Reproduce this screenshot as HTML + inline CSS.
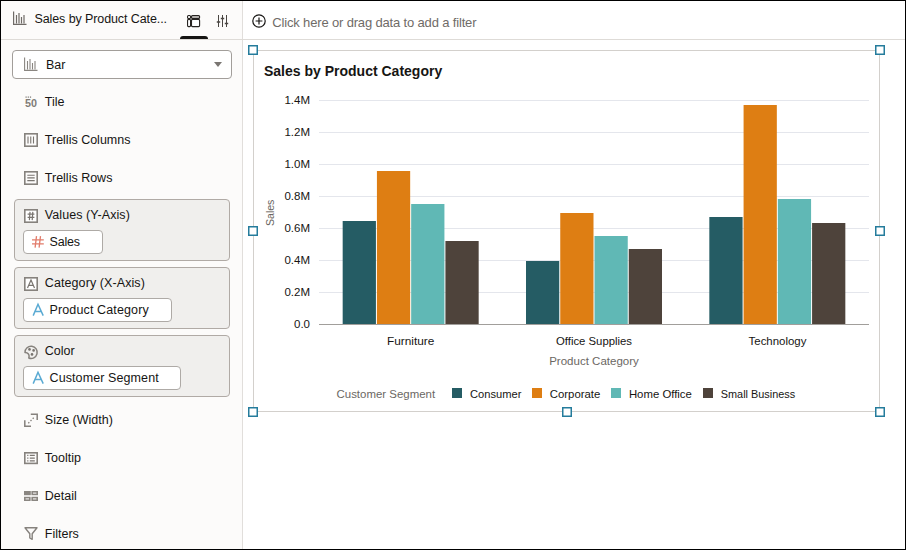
<!DOCTYPE html>
<html><head><meta charset="utf-8">
<style>
*{box-sizing:border-box;margin:0;padding:0}
html,body{width:906px;height:550px;overflow:hidden;background:#fff}
body{position:relative;font-family:"Liberation Sans",sans-serif;color:#161513}
.a{position:absolute}
.t{position:absolute;white-space:nowrap;line-height:1}
#frame{left:0;top:0;width:906px;height:550px;border:1px solid #000;z-index:50;pointer-events:none}
#left{left:1px;top:1px;width:242px;height:548px;background:#fcfbfa;border-right:1px solid #e1dedb}
#hline{left:1px;top:39px;width:904px;height:1px;background:#dedbd7}
.box{position:absolute;left:14px;width:216px;height:62px;background:#f0efed;border:1px solid #b0aaa5;border-radius:4px}
.pill{position:absolute;left:23px;height:24px;background:#fff;border:1px solid #aeaaa6;border-radius:4px}
.it{font-size:12.5px;color:#161513;margin-top:1.3px}
.ic{position:absolute}
.ax{font-size:11.5px;color:#161513}
.handle{position:absolute;width:10px;height:10px;border:2px solid #227a9c;background:#fff}
</style></head><body>
<div id="left" class="a"></div>
<div id="hline" class="a"></div>

<!-- header -->
<svg class="ic" style="left:13px;top:11px" width="14" height="14" viewBox="0 0 14 14">
 <g stroke="#6f6b67" stroke-width="1.2" fill="none">
  <path d="M0.6 0.5V13.4H13.5"/>
  <path d="M3.5 4V12.5M6 2V12.5M8.5 6V12.5M11 4V12.5"/>
 </g>
</svg>
<div class="t" style="left:34.5px;top:12.6px;font-size:12.5px;letter-spacing:-0.1px;color:#161513">Sales by Product Cate...</div>

<!-- tab icons -->
<svg class="ic" style="left:186px;top:14px" width="16" height="14" viewBox="0 0 16 14">
 <g stroke="#262320" stroke-width="1.1">
  <rect x="1.55" y="1.55" width="3" height="3" rx="1" fill="#fff"/>
  <rect x="1.55" y="5.4" width="3" height="7.2" rx="1" fill="#fff"/>
  <rect x="5.5" y="1.55" width="8.1" height="3" rx="1" fill="#b3b0ad"/>
  <rect x="5.5" y="5.4" width="8.1" height="7.2" rx="1" fill="#fff"/>
 </g>
</svg>
<div class="a" style="left:180px;top:36px;width:28px;height:3px;background:#161513;border-radius:3px 3px 0 0"></div>
<svg class="ic" style="left:216px;top:15px" width="14" height="12" viewBox="0 0 14 12">
 <g stroke="#4a4642" fill="none">
  <path d="M2.5 0V12M6.5 0V12M10.5 0V12" stroke-width="1"/>
  <path d="M0.8 7H4.2M4.8 3.4H8.2M8.8 8.6H12.2" stroke-width="1.5"/>
 </g>
</svg>

<!-- filter bar -->
<svg class="ic" style="left:252px;top:14px" width="14" height="14" viewBox="0 0 14 14">
 <circle cx="7" cy="7" r="6.2" fill="none" stroke="#161513" stroke-width="1.2"/>
 <path d="M7 3.6V10.4M3.6 7H10.4" stroke="#161513" stroke-width="1.2"/>
</svg>
<div class="t" style="left:272.3px;top:16px;font-size:13px;letter-spacing:-0.16px;color:#6f6b67">Click here or drag data to add a filter</div>

<!-- dropdown -->
<div class="a" style="left:12px;top:50px;width:220px;height:29px;background:#fff;border:1px solid #a29e9a;border-radius:4px"></div>
<svg class="ic" style="left:24px;top:57px" width="14" height="14" viewBox="0 0 14 14">
 <g stroke="#8a8681" stroke-width="1.1" fill="none">
  <path d="M0.6 0.5V13.4H13.5"/>
  <path d="M3.5 4V12.5M6 2V12.5M8.5 6V12.5M11 4V12.5"/>
 </g>
</svg>
<div class="t it" style="left:46px;top:58px">Bar</div>
<svg class="ic" style="left:213px;top:62px" width="10" height="6" viewBox="0 0 10 6"><path d="M1 0H9L5 5Z" fill="#7a7672"/></svg>

<!-- items -->
<div class="t it" style="left:44.8px;top:94.4px">Tile</div>
<div class="t it" style="left:44.8px;top:132.4px">Trellis Columns</div>
<div class="t it" style="left:44.8px;top:170.4px">Trellis Rows</div>

<div class="box" style="top:199px"></div>
<div class="t it" style="left:44.8px;top:207.4px;letter-spacing:0.07px">Values (Y-Axis)</div>
<div class="pill" style="top:230px;width:80px"></div>
<div class="t it" style="left:49.5px;top:234.4px;letter-spacing:-0.2px">Sales</div>

<div class="box" style="top:267px"></div>
<div class="t it" style="left:44.8px;top:275.4px;letter-spacing:0.09px">Category (X-Axis)</div>
<div class="pill" style="top:298px;width:149px"></div>
<div class="t it" style="left:49.5px;top:302.4px;letter-spacing:0.13px">Product Category</div>

<div class="box" style="top:335px"></div>
<div class="t it" style="left:44.8px;top:343.9px">Color</div>
<div class="pill" style="top:366px;width:158px"></div>
<div class="t it" style="left:49.5px;top:370.4px;letter-spacing:0.1px">Customer Segment</div>

<div class="t it" style="left:44.8px;top:412.4px">Size (Width)</div>
<div class="t it" style="left:44.8px;top:450.4px">Tooltip</div>
<div class="t it" style="left:44.8px;top:488.4px">Detail</div>
<div class="t it" style="left:44.8px;top:526.4px">Filters</div>

<!--ICONS-->
<svg class="a" style="left:0;top:0" width="250" height="550" viewBox="0 0 250 550">
 <g fill="none" stroke="#86827d" stroke-width="1.6">
  <!-- trellis columns -->
  <rect x="24.8" y="133.8" width="12.4" height="12.4"/>
  <path d="M28 136.5V143.6M30.75 136.5V143.6M33.5 136.5V143.6" stroke="#7a7671" stroke-width="1.1"/>
  <!-- trellis rows -->
  <rect x="24.8" y="171.8" width="12.4" height="12.4"/>
  <path d="M27.3 175.2H34.7M27.3 177.9H34.7M27.3 180.6H34.7" stroke="#7a7671" stroke-width="1.1"/>
  <!-- values -->
  <rect x="24.8" y="209.8" width="12.4" height="12.4" fill="#fff"/>
  <path d="M27.6 214.2H34.4M27.6 217.4H34.4M30 211.9L29.4 220.1M32.8 211.9L32.2 220.1" stroke="#7a7671" stroke-width="1.2"/>
  <!-- category -->
  <rect x="24.8" y="277.8" width="12.4" height="12.4" fill="#fff"/>
  <path d="M27.5 287.9L31 280L34.5 287.9M28.7 285.3H33.3" stroke="#7a7671" stroke-width="1.2"/>
  <!-- color palette -->
  <path d="M25 352.4A6.1 6.1 0 1 1 28.8 358C29.4 356 29 353.8 27 352.8C26.4 352.5 25.7 352.4 25 352.4Z" stroke-width="1.5" stroke-linejoin="round"/>
  <!-- size -->
  <path d="M30.8 414.2H37.2V420M24.8 420.2V426.2H31" stroke-width="1.5"/>
  <path d="M28.3 423.2L29.3 422.2M30.5 421L31.5 420M32.7 418.8L33.7 417.8" stroke-width="1.3"/>
  <!-- tooltip -->
  <rect x="24.8" y="452.8" width="12.4" height="10.6"/>
  <path d="M27.2 455.4H28.4M27.2 458.1H28.4M27.2 460.8H28.4M29.8 455.4H34.8M29.8 458.1H34.8M29.8 460.8H34.8" stroke="#7a7671" stroke-width="1.2"/>
  <!-- filters -->
  <path d="M25 527.7H37L32.2 533.8V539.3L29.8 538V533.8Z" stroke-width="1.4" stroke-linejoin="round"/>
 </g>
 <g fill="#77736e">
  <circle cx="29.5" cy="349.4" r="1.3"/><circle cx="33.6" cy="350.4" r="1.3"/><circle cx="32" cy="354.4" r="1.3"/>
 </g>
 <!-- detail -->
 <g fill="#8a8681">
  <rect x="24" y="491" width="6.8" height="4.2"/>
 </g>
 <g fill="none" stroke="#8a8681" stroke-width="1.6">
  <rect x="32.2" y="491.8" width="5" height="2.6"/>
  <rect x="24.8" y="497.6" width="5" height="2.6"/>
  <rect x="32.2" y="497.6" width="5" height="2.6"/>
 </g>
 <!-- tile 50 -->
 <g fill="#77736e">
  <rect x="25.5" y="96.5" width="1.2" height="1.2"/><rect x="27.7" y="96.5" width="1.2" height="1.2"/><rect x="29.9" y="96.5" width="1.2" height="1.2"/>
 </g>
 <text x="25" y="107" font-family="Liberation Sans" font-size="10.5" font-weight="bold" fill="#807c77" textLength="12" lengthAdjust="spacingAndGlyphs">50</text>
 <!-- pill icons -->
 <path d="M32 239.8H43.8M32 243.8H43.8M36.5 236.2L35.1 247.6M40.5 236.2L39.1 247.6" stroke="#e27c6b" stroke-width="1.3" fill="none"/>
 <path d="M33.2 315.6L38 304.3L43.2 315.6M35 311.6H41.3" stroke="#5aaad3" stroke-width="1.5" fill="none"/>
 <path d="M33.2 383.6L38 372.3L43.2 383.6M35 379.6H41.3" stroke="#5aaad3" stroke-width="1.5" fill="none"/>
</svg>
<!--/ICONS-->
<!-- selection box -->
<div class="a" style="left:253px;top:50px;width:627px;height:1px;background:#d3d0cc"></div>
<div class="a" style="left:253px;top:411px;width:627px;height:1px;background:#d3d0cc"></div>
<div class="a" style="left:253px;top:50px;width:1px;height:361px;background:#d3d0cc"></div>
<div class="a" style="left:879px;top:50px;width:1px;height:361px;background:#d3d0cc"></div>

<!--HANDLES--><svg class="a" style="left:0;top:0" width="906" height="550" viewBox="0 0 906 550"><rect x="248.75" y="45.75" width="8.5" height="8.5" fill="#fff" stroke="#257c9c" stroke-width="1.5"/><rect x="875.75" y="45.75" width="8.5" height="8.5" fill="#fff" stroke="#257c9c" stroke-width="1.5"/><rect x="248.75" y="226.75" width="8.5" height="8.5" fill="#fff" stroke="#257c9c" stroke-width="1.5"/><rect x="875.75" y="226.75" width="8.5" height="8.5" fill="#fff" stroke="#257c9c" stroke-width="1.5"/><rect x="248.75" y="407.75" width="8.5" height="8.5" fill="#fff" stroke="#257c9c" stroke-width="1.5"/><rect x="562.75" y="407.75" width="8.5" height="8.5" fill="#fff" stroke="#257c9c" stroke-width="1.5"/><rect x="875.75" y="407.75" width="8.5" height="8.5" fill="#fff" stroke="#257c9c" stroke-width="1.5"/></svg>
<!--/HANDLES-->
<!-- chart -->
<div class="t" style="left:264px;top:63.8px;font-size:14px;font-weight:bold;color:#161513">Sales by Product Category</div>
<!--CHART--><svg class="a" style="left:0;top:0" width="906" height="550" viewBox="0 0 906 550" font-family="Liberation Sans">
<rect x="319" y="100" width="550" height="1" fill="#e4e6ec"/>
<rect x="319" y="132" width="550" height="1" fill="#e4e6ec"/>
<rect x="319" y="164" width="550" height="1" fill="#e4e6ec"/>
<rect x="319" y="196" width="550" height="1" fill="#e4e6ec"/>
<rect x="319" y="228" width="550" height="1" fill="#e4e6ec"/>
<rect x="319" y="260" width="550" height="1" fill="#e4e6ec"/>
<rect x="319" y="292" width="550" height="1" fill="#e4e6ec"/>
<rect x="342.67" y="221" width="33.25" height="103" fill="#255c64"/>
<rect x="376.92" y="171" width="33.25" height="153" fill="#de7e13"/>
<rect x="411.17" y="204" width="33.25" height="120" fill="#60b8b5"/>
<rect x="445.42" y="241" width="33.25" height="83" fill="#4e433b"/>
<rect x="526.00" y="261" width="33.25" height="63" fill="#255c64"/>
<rect x="560.25" y="213" width="33.25" height="111" fill="#de7e13"/>
<rect x="594.50" y="236" width="33.25" height="88" fill="#60b8b5"/>
<rect x="628.75" y="249" width="33.25" height="75" fill="#4e433b"/>
<rect x="709.33" y="217" width="33.25" height="107" fill="#255c64"/>
<rect x="743.58" y="105" width="33.25" height="219" fill="#de7e13"/>
<rect x="777.83" y="199" width="33.25" height="125" fill="#60b8b5"/>
<rect x="812.08" y="223" width="33.25" height="101" fill="#4e433b"/>
<rect x="319" y="324" width="550" height="1" fill="#a19e9b"/>
<text x="310" y="104" text-anchor="end" font-size="11.5" fill="#161513">1.4M</text>
<text x="310" y="136" text-anchor="end" font-size="11.5" fill="#161513">1.2M</text>
<text x="310" y="168" text-anchor="end" font-size="11.5" fill="#161513">1.0M</text>
<text x="310" y="200" text-anchor="end" font-size="11.5" fill="#161513">0.8M</text>
<text x="310" y="232" text-anchor="end" font-size="11.5" fill="#161513">0.6M</text>
<text x="310" y="264" text-anchor="end" font-size="11.5" fill="#161513">0.4M</text>
<text x="310" y="296" text-anchor="end" font-size="11.5" fill="#161513">0.2M</text>
<text x="310" y="328" text-anchor="end" font-size="11.5" fill="#161513">0.0</text>
<text x="387.02" y="345" font-size="11" fill="#161513" textLength="47.3" lengthAdjust="spacingAndGlyphs">Furniture</text>
<text x="556.00" y="345" font-size="11" fill="#161513" textLength="76" lengthAdjust="spacingAndGlyphs">Office Supplies</text>
<text x="748.60" y="345" font-size="11" fill="#161513" textLength="57.8" lengthAdjust="spacingAndGlyphs">Technology</text>
<text x="549.2" y="365" font-size="11" fill="#6b6763" textLength="89.6" lengthAdjust="spacingAndGlyphs">Product Category</text>
<text transform="translate(274,226) rotate(-90)" x="0" y="0" font-size="11" fill="#6b6763" textLength="26.4" lengthAdjust="spacingAndGlyphs">Sales</text>
<text x="336.5" y="398" font-size="11" fill="#6b6763" textLength="98.6" lengthAdjust="spacingAndGlyphs">Customer Segment</text>
<rect x="452" y="388" width="10" height="10" fill="#255c64"/>
<text x="470" y="398" font-size="11" fill="#161513" textLength="51.4" lengthAdjust="spacingAndGlyphs">Consumer</text>
<rect x="532" y="388" width="10" height="10" fill="#de7e13"/>
<text x="549.8" y="398" font-size="11" fill="#161513" textLength="50.5" lengthAdjust="spacingAndGlyphs">Corporate</text>
<rect x="611" y="388" width="10" height="10" fill="#60b8b5"/>
<text x="628.9" y="398" font-size="11" fill="#161513" textLength="63" lengthAdjust="spacingAndGlyphs">Home Office</text>
<rect x="703" y="388" width="10" height="10" fill="#4e433b"/>
<text x="720.8" y="398" font-size="11" fill="#161513" textLength="74.4" lengthAdjust="spacingAndGlyphs">Small Business</text>
</svg><!--/CHART-->

<div id="frame" class="a"></div>
</body></html>
